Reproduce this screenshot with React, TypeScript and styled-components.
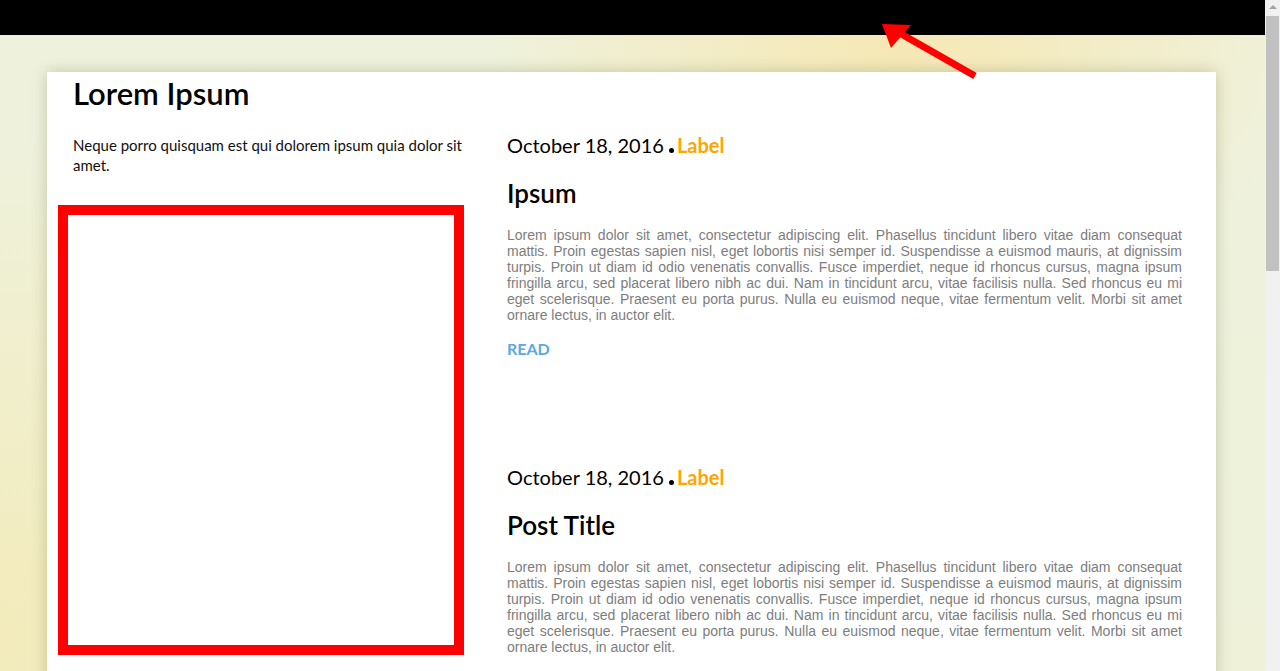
import React from "react";
import styled, { createGlobalStyle } from "styled-components";

interface Post {
  date: string;
  label: string;
  title: string;
  body: string;
}

const LOREM =
  "Lorem ipsum dolor sit amet, consectetur adipiscing elit. Phasellus tincidunt libero vitae diam consequat mattis. Proin egestas sapien nisl, eget lobortis nisi semper id. Suspendisse a euismod mauris, at dignissim turpis. Proin ut diam id odio venenatis convallis. Fusce imperdiet, neque id rhoncus cursus, magna ipsum fringilla arcu, sed placerat libero nibh ac dui. Nam in tincidunt arcu, vitae facilisis nulla. Sed rhoncus eu mi eget scelerisque. Praesent eu porta purus. Nulla eu euismod neque, vitae fermentum velit. Morbi sit amet ornare lectus, in auctor elit.";

const posts: Post[] = [
  { date: "October 18, 2016", label: "Label", title: "Ipsum", body: LOREM },
  { date: "October 18, 2016", label: "Label", title: "Post Title", body: LOREM },
  { date: "October 18, 2016", label: "Label", title: "Post Title", body: LOREM },
];

//global
const GlobalStyle = createGlobalStyle`
  html, body {
    margin: 0;
    padding: 0;
  }
  body {
    font-family: Lato, "Open Sans", sans-serif;
    background: #eef1dc;
  }
`;

//styled-components
const Page = styled.div`
  position: relative;
  min-height: 100vh;
  margin-right: 15px;
  background:
    radial-gradient(ellipse 420px 260px at 900px 40px, #f6e8b4 0%, rgba(246, 232, 180, 0) 100%),
    radial-gradient(ellipse 500px 500px at 0px 640px, #f3ebbb 0%, rgba(243, 235, 187, 0) 100%),
    linear-gradient(180deg, #eef2dd 0%, #eff0d6 100%);
`;

const TopBar = styled.div`
  height: 35px;
  background: #000;
`;

const Card = styled.main`
  margin: 37px 49px 40px 47px;
  background: #fff;
  box-shadow: 0 0 14px rgba(90, 90, 40, 0.28);
  padding: 0 34px 40px 11px;
  display: grid;
  grid-template-columns: 422px 1fr;
  column-gap: 27px;
`;

const Sidebar = styled.aside`
  display: flex;
  flex-direction: column;
`;

const SiteTitle = styled.h1`
  margin: 2px 0 0 15px;
  font-size: 31px;
  line-height: 38px;
  font-weight: 600;
  color: #000;
`;

const SiteDesc = styled.p`
  margin: 23px 0 0 15px;
  font-size: 15px;
  line-height: 20px;
  color: #111;
`;

const Frame = styled.div`
  margin-top: 30px;
  width: 386px;
  height: 430px;
  border: 10px solid #ff0000;
`;

const Feed = styled.section`
  display: flex;
  flex-direction: column;
  gap: 104px;
  padding-top: 59px;
`;

const Article = styled.article`
  display: flex;
  flex-direction: column;
`;

const Meta = styled.div`
  display: flex;
  align-items: baseline;
  font-size: 20px;
  line-height: 28px;
  color: #000;
`;

const Dot = styled.span`
  display: inline-block;
  width: 5px;
  height: 5px;
  border-radius: 50%;
  background: #000;
  margin: 0 3px 0 5px;
`;

const Label = styled.a`
  font-weight: 700;
  color: #ffa500;
  text-decoration: none;
`;

const PostTitle = styled.h2`
  margin: 18px 0 0;
  font-size: 26px;
  line-height: 32px;
  font-weight: 600;
  color: #000;
`;

const Body = styled.p`
  margin: 18px 0 0;
  font-family: "Liberation Sans", Arial, sans-serif;
  font-size: 14px;
  line-height: 16px;
  color: #7d7d7d;
  text-align: justify;
`;

const Read = styled.a`
  margin-top: 16px;
  font-size: 16px;
  line-height: 20px;
  font-weight: 700;
  color: #5aa9e0;
  text-decoration: none;
`;

const Arrow = styled.svg`
  position: absolute;
  left: 876px;
  top: 18px;
  width: 110px;
  height: 70px;
  pointer-events: none;
`;

const ScrollRail = styled.div`
  position: fixed;
  top: 0;
  right: 0;
  width: 15px;
  height: 100vh;
  background: #f1f1f1;
`;

const ScrollUp = styled.div`
  position: absolute;
  top: 5px;
  left: 4px;
  width: 0;
  height: 0;
  border-left: 4px solid transparent;
  border-right: 4px solid transparent;
  border-bottom: 4px solid #a3a3a3;
`;

const ScrollThumb = styled.div`
  position: absolute;
  top: 16px;
  left: 1px;
  width: 13px;
  height: 255px;
  background: #c1c1c1;
`;

const App: React.FC = () => {
  return (
    <>
      <GlobalStyle />
      <Page>
        <TopBar />
        <Card>
          <Sidebar>
            <SiteTitle>Lorem Ipsum</SiteTitle>
            <SiteDesc>Neque porro quisquam est qui dolorem ipsum quia dolor sit amet.</SiteDesc>
            <Frame />
          </Sidebar>
          <Feed>
            {posts.map((post, i) => (
              <Article key={i}>
                <Meta>
                  <span>{post.date}</span>
                  <Dot />
                  <Label href="#">{post.label}</Label>
                </Meta>
                <PostTitle>{post.title}</PostTitle>
                <Body>{post.body}</Body>
                <Read href="#">READ</Read>
              </Article>
            ))}
          </Feed>
        </Card>
        <Arrow viewBox="0 0 110 70">
          <line x1="99" y1="58" x2="20" y2="13" stroke="#ff0000" strokeWidth="7" />
          <polygon points="6,6 35,7 15,30" fill="#ff0000" />
        </Arrow>
      </Page>
      <ScrollRail>
        <ScrollUp />
        <ScrollThumb />
      </ScrollRail>
    </>
  );
};

export default App;
